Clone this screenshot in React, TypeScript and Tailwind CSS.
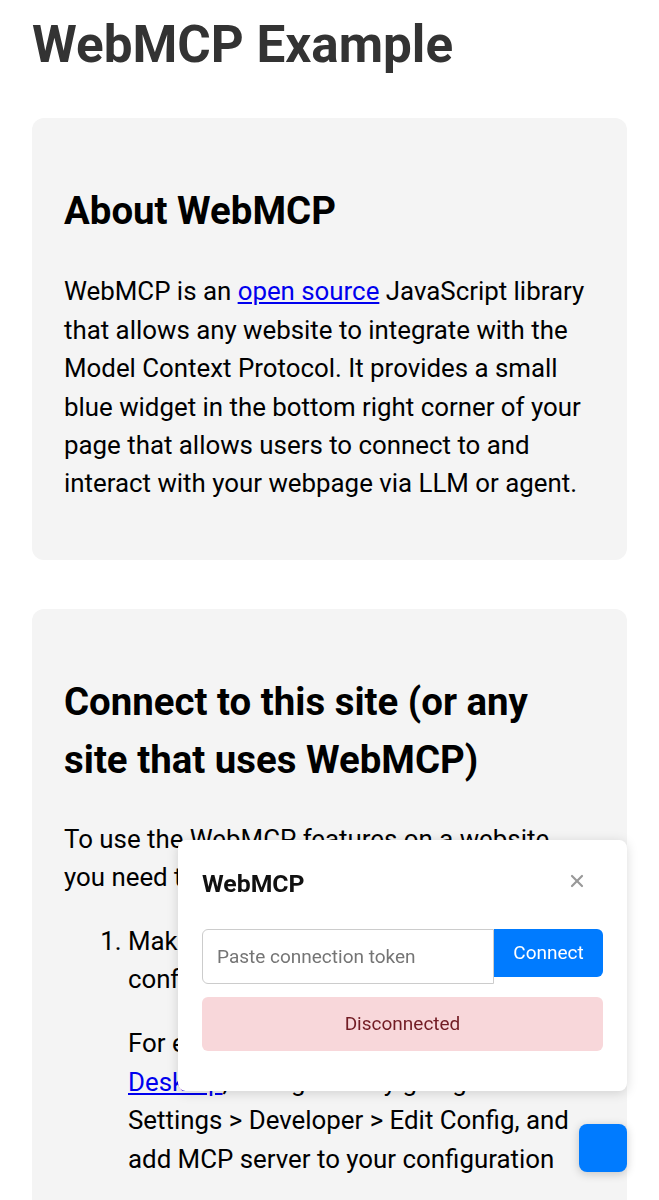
import { X } from 'lucide-react'

function Card({ children, className = '' }: { children: React.ReactNode; className?: string }) {
  return <section className={`rounded-[12px] bg-[#f4f4f4] px-8 pt-[34px] pb-[32px] ${className}`}>{children}</section>
}

function WidgetPanel() {
  return (
    <div className="fixed right-8 bottom-[109px] w-[449px] rounded-[8px] bg-white px-6 pt-6 pb-10 shadow-[0_2px_12px_rgba(0,0,0,0.15)] font-['Roboto',sans-serif]">
      <div className="flex h-10 items-center justify-between">
        <div className="text-[24.8px] font-bold text-[#111]">WebMCP</div>
        <button className="mr-[16px] mb-[7px] text-[#999]">
          <X size={20} strokeWidth={2.6} />
        </button>
      </div>
      <div className="mt-[25px] flex items-start">
        <input
          className="h-[55px] w-[292px] rounded-l-[6px] border border-[#ccc] px-[14px] text-[19px] text-[#333] outline-none placeholder:text-[#757575]"
          placeholder="Paste connection token"
        />
        <button className="h-12 flex-1 rounded-r-[6px] bg-[#007bff] text-[19px] text-white">Connect</button>
      </div>
      <div className="mt-[13px] flex h-[54px] items-center justify-center rounded-[6px] bg-[#f8d7da] text-[19px] text-[#721c24]">
        Disconnected
      </div>
    </div>
  )
}

export default function App() {
  return (
    <div className="min-h-[1200px] bg-white px-8 pt-[7px] font-['Roboto',sans-serif] text-[25.85px] leading-[38.4px] text-black">
      <h1 className="mb-[34px] text-[51.2px] font-bold leading-[1.5] text-[#333]">WebMCP Example</h1>

      <Card>
        <h2 className="mt-[30px] mb-[33px] text-[38.4px] font-bold leading-[1.5]">About WebMCP</h2>
        <p className="mb-[25.6px]">
          WebMCP is an{' '}
          <a href="#" className="text-[#0000ee] underline">
            open source
          </a>{' '}
          JavaScript library that allows any website to integrate with the Model Context Protocol. It provides a small blue
          widget in the bottom right corner of your page that allows users to connect to and interact with your webpage via
          LLM or agent.
        </p>
      </Card>

      <Card className="mt-[49px]">
        <h2 className="mt-[30px] mb-[31px] text-[38.4px] font-bold leading-[1.5]">
          Connect to this site (or any site that uses WebMCP)
        </h2>
        <p className="mb-[25.6px]">To use the WebMCP features on a website you need to:</p>
        <ol className="list-decimal pl-16">
          <li>
            <p className="mb-[25.6px]">Make sure you have an MCP client configured.</p>
            <p className="mb-[25.6px]">
              For example, if you're using Claude{' '}
              <a href="#" className="text-[#0000ee] underline">
                Desktop
              </a>
              , configure it by going to Settings &gt; Developer &gt; Edit Config, and add MCP server to your
              configuration
            </p>
          </li>
        </ol>
      </Card>

      <WidgetPanel />
      <button className="fixed right-8 bottom-[28px] h-12 w-12 rounded-[8px] bg-[#007bff] shadow-[0_2px_10px_rgba(0,0,0,0.2)]" />
    </div>
  )
}
